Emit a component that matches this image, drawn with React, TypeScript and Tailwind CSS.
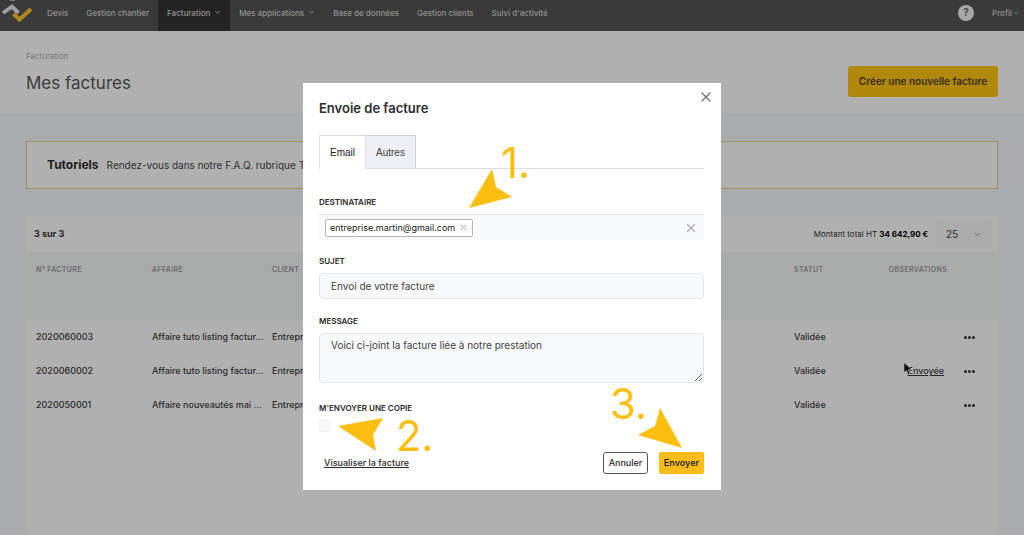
import React, { useState } from 'react';
import { ChevronDown, X } from 'lucide-react';

const navLinks = [
  { label: 'Devis', menu: false },
  { label: 'Gestion chantier', menu: false },
  { label: 'Facturation', menu: true },
  { label: 'Mes applications', menu: true },
  { label: 'Base de données', menu: false },
  { label: 'Gestion clients', menu: false },
  { label: "Suivi d'activité", menu: false },
];

const invoices = [
  { id: '2020060003', affaire: 'Affaire tuto listing factur...', client: 'Entreprise', statut: 'Validée', sent: false },
  { id: '2020060002', affaire: 'Affaire tuto listing factur...', client: 'Entreprise', statut: 'Validée', sent: true },
  { id: '2020050001', affaire: 'Affaire nouveautés mai ...', client: 'Entreprise', statut: 'Validée', sent: false },
];

const Logo = () => (
  <svg viewBox="0 0 34 24" className="h-6 w-[34px]" fill="none" strokeWidth="4">
    <path d="M3 13 L12 6.5 L18.5 13" stroke="#e4e4e4" />
    <path d="M13.5 14 L19.5 19.5 L31 9" stroke="#fbc02d" />
    <path d="M10 0.5 H15" stroke="#b0b0b0" strokeWidth="1" />
  </svg>
);

const Header = () => (
  <header className="flex h-[31px] items-stretch bg-[#545454] text-[8px] font-medium text-[#cfcfcf]">
    <a href="#" aria-label="Accueil" className="mr-1 block">
      <Logo />
    </a>
    <nav className="flex items-stretch">
      {navLinks.map((link) => (
        <a
          key={link.label}
          href="#"
          className={`flex items-center gap-1 whitespace-nowrap pb-[6px] ${
            link.label === 'Facturation' ? 'bg-[#343434] px-[9px]' : 'px-[9px]'
          }`}
        >
          {link.label}
          {link.menu && <ChevronDown className="h-[7px] w-[7px]" strokeWidth={3} />}
        </a>
      ))}
    </nav>
    <div className="ml-auto flex items-center gap-[18px] pb-[6px] pr-1">
      <button aria-label="Aide" className="flex h-4 w-4 items-center justify-center rounded-full bg-[#f0f0f0] text-[10px] font-bold text-[#666]">
        ?
      </button>
      <button className="flex items-center">
        Profil
        <ChevronDown className="h-2 w-2" />
      </button>
    </div>
  </header>
);

// Mouse pointer resting on the "Envoyée" link
const Pointer = () => (
  <svg viewBox="0 0 10 14" className="absolute -left-1 -top-[2px] h-[14px] w-[10px]">
    <path d="M1 0.5 L1 10.5 L3.4 8.4 L5.2 12.6 L7 11.8 L5.3 7.8 L8.6 7.6 Z" fill="#000" stroke="#fff" strokeWidth="0.7" />
  </svg>
);

const InvoiceTable = () => (
  <table className="w-full table-fixed text-left text-[9px] font-medium text-[#3c3c3c]">
    <colgroup>
      <col className="w-[116px]" />
      <col className="w-[120px]" />
      <col />
      <col className="w-[102px]" />
      <col className="w-[64px]" />
      <col className="w-[48px]" />
    </colgroup>
    <thead className="bg-[#f3f4f4] text-[7px] uppercase tracking-wider text-[#999]">
      <tr className="h-9">
        <th className="px-[10px] font-semibold">N° facture</th>
        <th className="px-[10px] font-semibold">Affaire</th>
        <th className="px-[10px] font-semibold">Client</th>
        <th className="px-[10px] font-semibold">Statut</th>
        <th className="text-center font-semibold">Observations</th>
        <th aria-label="Actions"></th>
      </tr>
      <tr className="h-8">
        <td colSpan={6}></td>
      </tr>
    </thead>
    <tbody>
      {invoices.map((inv) => (
        <tr key={inv.id} className="h-[34px]">
          <td className="px-[10px]">{inv.id}</td>
          <td className="whitespace-nowrap px-[10px]">{inv.affaire}</td>
          <td className="px-[10px]">{inv.client}</td>
          <td className="px-[10px]">{inv.statut}</td>
          <td className="pr-[6px] text-right">
            {inv.sent && (
              <span className="relative inline-block">
                <a href="#" className="underline">Envoyée</a>
                <Pointer />
              </span>
            )}
          </td>
          <td>
            <button aria-label="Actions" className="ml-[14px] flex gap-[1px]">
              <span className="h-[3px] w-[3px] rounded-full bg-[#333]"></span>
              <span className="h-[3px] w-[3px] rounded-full bg-[#333]"></span>
              <span className="h-[3px] w-[3px] rounded-full bg-[#333]"></span>
            </button>
          </td>
        </tr>
      ))}
    </tbody>
  </table>
);

// Numbered steps drawn over the dialog
const Steps = () => (
  <svg className="pointer-events-none absolute inset-0 h-full w-full" fill="#fdbf0f">
    <polygon points="189,86 193,104 209,114 166,125" />
    <polygon points="35,343 80,335 70,352 73,368" />
    <polygon points="357,325 379,365 335,352 352,343" />
    <g className="text-[42px]">
      <text x="198" y="95">1.</text>
      <text x="93" y="368">2.</text>
      <text x="307" y="336">3.</text>
    </g>
  </svg>
);

const labelClass = 'block w-fit text-[8px] leading-3 font-semibold uppercase text-[#2a2a2a]';
const fieldClass = 'mt-[6px] block w-full rounded-sm border border-[#e3e6ea] bg-[#f8f9fb] px-[11px] text-[10px] text-[#444] outline-none';

const SendModal = () => {
  const [subject, setSubject] = useState('Envoi de votre facture');
  const [message, setMessage] = useState('Voici ci-joint la facture liée à notre prestation');
  const [copy, setCopy] = useState(false);

  return (
    <div className="fixed inset-0 flex items-start justify-center bg-black/30 pt-[83px]">
      <div role="dialog" aria-labelledby="send-title" className="relative w-[418px] bg-white py-4 pr-[17px] pl-4">
        <div className="flex h-[18px] items-start justify-between">
          <h2 id="send-title" className="text-[13px] leading-[18px] font-semibold text-[#2d2d2d]">Envoie de facture</h2>
          <button aria-label="Fermer" className="-mt-[10px] -mr-[10px] text-[#777]">
            <X className="h-4 w-4" strokeWidth={2} />
          </button>
        </div>

        <div role="tablist" className="mt-[18px] flex h-[34px] border-b border-[#dcdfe3] font-['Liberation_Sans',sans-serif] text-[10px]">
          <button role="tab" aria-selected="true" className="-mb-px border border-b-0 border-[#dcdfe3] bg-white px-[10px] text-[#222]">Email</button>
          <button role="tab" aria-selected="false" className="border border-b-0 border-l-0 border-[#cfd2d6] bg-[#eeeff4] px-[10px] text-[#444]">Autres</button>
        </div>

        <label htmlFor="recipient" className={`mt-[27px] ${labelClass}`}>Destinataire</label>
        <div className="mt-[6px] flex h-[26px] items-center border-t border-[#e3e6ea] bg-[#f8f9fb] px-[6px]">
          <span className="flex h-[18px] items-center gap-1 whitespace-nowrap rounded-[2px] border border-[#b5b5b5] bg-white px-1 text-[9px] text-[#222]">
            entreprise.martin@gmail.com
            <button aria-label="Retirer"><X className="h-[9px] w-[9px] text-[#999]" /></button>
          </span>
          <input id="recipient" className="min-w-0 flex-1 bg-transparent outline-none" />
          <button aria-label="Vider"><X className="h-[14px] w-[14px] text-[#aaa]" /></button>
        </div>

        <label htmlFor="subject" className={`mt-[15px] ${labelClass}`}>Sujet</label>
        <input id="subject" value={subject} onChange={(e) => setSubject(e.target.value)} className={`h-[26px] ${fieldClass}`} />

        <label htmlFor="message" className={`mt-4 ${labelClass}`}>Message</label>
        <textarea id="message" value={message} onChange={(e) => setMessage(e.target.value)} className={`h-[50px] resize-y py-[3px] leading-4 ${fieldClass}`} />

        <label htmlFor="copy" className={`mt-[19px] ${labelClass}`}>M'envoyer une copie</label>
        <input
          id="copy"
          type="checkbox"
          checked={copy}
          onChange={(e) => setCopy(e.target.checked)}
          className="mt-[6px] block h-3 w-3 appearance-none rounded-[2px] border border-[#f0f0f0] bg-[#f8f8f8] checked:bg-[#fdbf0f]"
        />

        <div className="mt-5 flex h-[22px] items-center text-[9px] font-semibold text-[#2a2a2a]">
          <a href="#" className="ml-[5px] font-medium underline">Visualiser la facture</a>
          <button className="ml-auto h-full w-[45px] rounded-[3px] border border-[#555] bg-white font-medium">Annuler</button>
          <button className="ml-[11px] h-full w-[45px] rounded-[2px] bg-[#fbbc1a]">Envoyer</button>
        </div>

        <Steps />
      </div>
    </div>
  );
};

export default function App() {
  return (
    <div className="flex min-h-screen flex-col bg-[#f3f5f6] font-['Inter',sans-serif]">
      <Header />
      <div className="flex items-start justify-between bg-[#fdfdfd] px-[26px] pt-5 pb-4">
        <div>
          <a href="#" className="block text-[8px] leading-[10px] text-[#aaa]">Facturation</a>
          <h1 className="mt-[10px] text-[17px] leading-6 text-[#555]">Mes factures</h1>
        </div>
        <button className="mt-[15px] h-[31px] w-[150px] rounded-[3px] bg-[#fbc312] text-[10px] font-semibold text-[#4d3d0c]">
          Créer une nouvelle facture
        </button>
      </div>

      <main className="flex flex-1 flex-col px-[26px] pt-7">
        <div className="flex h-12 items-center gap-2 border border-[#eccb85] bg-[#fcfcfc] px-5 text-[#444]">
          <strong className="text-[12px] font-bold text-[#2c2c2c]">Tutoriels</strong>
          <span className="text-[10px]">Rendez-vous dans notre F.A.Q. rubrique Tutoriels</span>
        </div>

        <section className="mt-[27px] flex-1 bg-[#fdfdfd]">
          <div className="flex h-9 items-center pl-2 text-[9px] text-[#333]">
            <strong>3 sur 3</strong>
            <p className="ml-auto text-[8px]">
              Montant total HT <strong className="text-black">34 642,90 €</strong>
            </p>
            <div className="relative ml-2 mr-[6px]">
              <select aria-label="Lignes par page" className="block h-7 w-14 appearance-none rounded-sm bg-[#f5f5f5] pl-[10px] text-[10px] text-[#444]">
                <option>25</option>
                <option>50</option>
              </select>
              <ChevronDown className="pointer-events-none absolute right-[10px] top-[10px] h-[9px] w-[9px] text-[#666]" />
            </div>
          </div>
          <InvoiceTable />
        </section>
      </main>

      <SendModal />
    </div>
  );
}
